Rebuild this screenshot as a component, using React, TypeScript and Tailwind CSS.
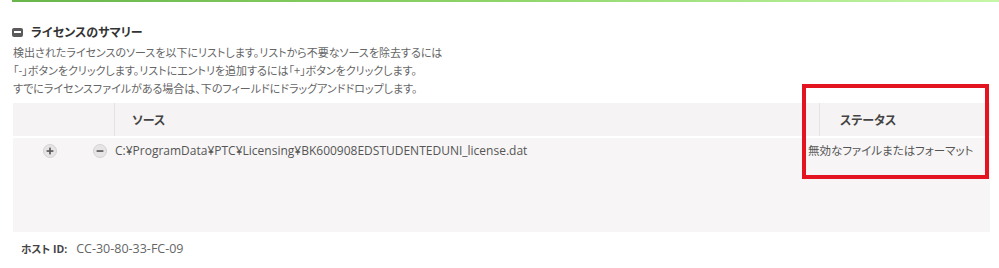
import React from "react";

const jp = "font-['Noto_Sans_CJK_JP',sans-serif] [font-feature-settings:'palt']";
const mixed = "font-['Open_Sans','Noto_Sans_CJK_JP',sans-serif] [font-feature-settings:'palt']";

function RoundButton({ sign }: { sign: "+" | "-" }) {
  return (
    <svg width="14" height="14" viewBox="0 0 14 14">
      <circle cx="7" cy="7" r="6.5" fill="#e6e4e4" stroke="#d4d2d2" strokeWidth="1" />
      <rect x="3.6" y="6.2" width="6.8" height="1.7" fill="#5c5c5c" />
      {sign === "+" && <rect x="6.15" y="3.6" width="1.7" height="6.8" fill="#5c5c5c" />}
    </svg>
  );
}

export default function App() {
  return (
    <div className="relative w-[999px] h-[268px] bg-white overflow-hidden">
      <div className="ml-[12px] h-[2px] bg-gradient-to-r from-[#69b64a] via-[#8fd66a] to-[#c6f7a8]" />

      <div className="pl-[12px] pr-[9px]">
        <div className={`mt-[21px] flex items-center gap-[8px] text-[12px] font-bold text-[#333] ${jp}`}>
          <span className="flex h-[9px] w-[11px] items-center justify-center rounded-[2px] bg-[#5a5a5a]">
            <span className="h-[2px] w-[7px] bg-white" />
          </span>
          <span>ライセンスのサマリー</span>
        </div>

        <div className={`mt-[2px] pl-[1px] text-[11px] leading-[18px] text-[#666] ${jp}`}>
          <p>検出されたライセンスのソースを以下にリストします。リストから不要なソースを除去するには</p>
          <p>「-」ボタンをクリックします。リストにエントリを追加するには「+」ボタンをクリックします。</p>
          <p>すでにライセンスファイルがある場合は、下のフィールドにドラッグアンドドロップします。</p>
        </div>

        <div className="mt-[6px] ml-[1px] w-[977px]">
          <div className="flex h-[33px] bg-[#f5f3f3]">
            <div className="w-[102px] border-r border-[#e4e2e2]" />
            <div className={`flex flex-1 items-center pl-[17px] text-[12px] font-bold text-[#444] ${jp}`}>ソース</div>
            <div className={`flex w-[171px] items-center border-l border-[#e4e2e2] pl-[20px] text-[12px] font-bold text-[#444] ${jp}`}>
              ステータス
            </div>
          </div>
          <div className="h-[2px] bg-white" />
          <div className="h-[94px] bg-[#f7f5f5]">
            <div className="flex h-[26px] items-center">
              <div className="flex w-[74px] justify-center">
                <RoundButton sign="+" />
              </div>
              <div className="flex w-[26px] justify-center">
                <RoundButton sign="-" />
              </div>
              <div className={`flex-1 pl-[2px] text-[12px] text-[#555] ${mixed}`}>
                C:¥ProgramData¥PTC¥Licensing¥BK600908EDSTUDENTEDUNI_license.dat
              </div>
              <div className={`w-[182px] whitespace-nowrap text-[11.5px] text-[#555] ${jp}`}>無効なファイルまたはフォーマット</div>
            </div>
          </div>
        </div>

        <div className={`mt-[8px] flex items-center pl-[9px] ${mixed}`}>
          <span className="text-[10.5px] font-bold text-[#444]">ホスト ID:</span>
          <span className="ml-[9px] text-[12.5px] text-[#666]">CC-30-80-33-FC-09</span>
        </div>
      </div>

      <div className="pointer-events-none absolute left-[802px] top-[84px] h-[95px] w-[187px] border-[4px] border-[#e3141f]" />
    </div>
  );
}
